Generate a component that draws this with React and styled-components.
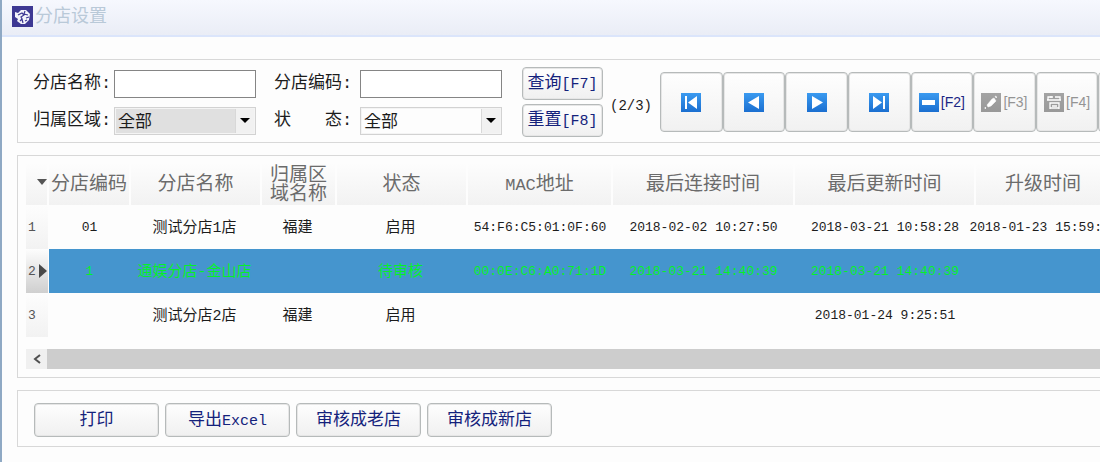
import React from "react";
import styled, { createGlobalStyle, css } from "styled-components";

const GlobalStyle = createGlobalStyle`
  * { box-sizing: border-box; }
  body {
    margin: 0;
    background: #fdfdfd;
    font-family: "Liberation Mono", "Noto Sans CJK SC", monospace;
    font-size: 17px;
    color: #1c1c1c;
  }
  button, input, select { font: inherit; color: inherit; margin: 0; }
`;

const Window = styled.div`
  min-height: 100vh;
  border-left: 2px solid #8fa9c4;
  overflow: hidden;
`;

const TitleBar = styled.header`
  display: flex;
  align-items: center;
  gap: 2px;
  height: 37px;
  padding: 0 10px 3px;
  background: linear-gradient(#f6f8fe, #eaedf6);
  border-bottom: 2px solid #dbe5fb;
`;

const Title = styled.h1`
  margin: 0;
  padding-top: 2px;
  font-size: 18px;
  line-height: 24px;
  font-weight: 400;
  color: #b9c9d8;
`;

const Content = styled.main`
  display: flex;
  flex-direction: column;
  gap: 12px;
  padding: 22px 0 15px 15px;
`;

const Panel = styled.section`
  border: 1px solid #d8d8d8;
  border-right: 0;
  overflow: hidden;
`;

const Toolbar = styled(Panel)`
  display: flex;
  align-items: center;
  padding: 7px 0 5px 15px;
`;

const Filters = styled.form`
  display: grid;
  flex: none;
  grid-template-columns: 81px 142px 18px 86px 142px;
  grid-auto-rows: 28px;
  row-gap: 9px;
`;

const Label = styled.label`
  grid-column: ${(p) => (p.$second ? 4 : 1)};
  line-height: 28px;
  white-space: nowrap;
`;

const TextField = styled.input`
  width: 100%;
  height: 28px;
  padding: 0 4px;
  background: #fff;
  border: 1px solid #858585;
  border-radius: 0;
`;

const SelectWrap = styled.div`
  display: grid;
  grid-template-columns: 1fr 20px;
  height: 28px;
  border: 1px solid #d2d2d2;
  background: #f1f1f1;
`;

const Select = styled.select`
  grid-area: 1 / 1 / 2 / 3;
  appearance: none;
  width: 100%;
  padding: 3px 22px 0 2px;
  border: 1px solid #f4f4f4;
  border-radius: 0;
  background: linear-gradient(to left, #f1f1f1 18px, #d8d8d8 18px, #d8d8d8 19px, ${(p) => (p.$shaded ? "#e0e0e0" : "#fdfdfd")} 19px);
`;

const Arrow = styled.svg`
  grid-area: 1 / 2;
  align-self: center;
  justify-self: center;
  pointer-events: none;
`;

const Button = styled.button`
  height: ${(p) => (p.$tall ? 34 : 33)}px;
  width: ${(p) => (p.$tall ? 125 : 81)}px;
  padding: 2px 0 0;
  border: 1px solid #b6baba;
  border-radius: 4px;
  background: linear-gradient(#fefefe, #f0f0f0);
  box-shadow: inset 0 0 0 1px #e6e6e6;
  color: #14227c;
  line-height: 24px;
  white-space: nowrap;
`;

const Latin = styled.span`
  font-size: 15px;
`;

const HeadLatin = styled.span`
  font-size: 17px;
`;

const ButtonStack = styled.div`
  display: flex;
  flex: none;
  flex-direction: column;
  gap: 4px;
  margin-left: 20px;
`;

const Counter = styled.output`
  flex: none;
  width: 57px;
  padding: 8px 0 0 7px;
  font-size: 14px;
`;

const Nav = styled.nav`
  display: grid;
  flex: none;
  grid-template-columns: repeat(8, 1fr);
  width: 501px;
`;

const NavButton = styled.button`
  display: flex;
  align-items: center;
  justify-content: center;
  gap: 2px;
  height: 60px;
  padding: 0;
  border: 1px solid #b6baba;
  border-radius: 4px;
  background: linear-gradient(#fefefe, #f1f1f1);
  box-shadow: inset 0 0 0 1px #e6e6e6;
  color: ${(p) => (p.disabled ? "#949494" : "#1a2684")};
  font-family: "Liberation Sans", sans-serif;
  font-size: 14px;
`;

const GridPanel = styled(Panel)`
  padding: 7px 0 8px 8px;
`;

const Table = styled.table`
  width: 1086px;
  table-layout: fixed;
  border-collapse: separate;
  border-spacing: 0;
`;

const HeadCell = styled.th`
  height: 42px;
  padding: 3px 0 0;
  border-right: 2px solid #fdfdfd;
  background: linear-gradient(#fdfdfd, #f2f2f2);
  color: #6b6b6b;
  font-size: 19px;
  line-height: 19px;
  font-weight: 400;
  text-align: center;

  svg { display: block; margin: 0 0 8px 11px; }
`;

const Wrapped = styled.span`
  display: block;
  width: 57px;
  margin: 0 auto;
`;

const Cell = styled.td`
  height: 44px;
  padding: ${(p) => (p.$code ? "2px 1px 0 0" : "4px 4px 0 0")};
  font-size: ${(p) => (p.$code ? 13 : 15)}px;
  line-height: 20px;
  ${(p) => p.$selected && css`background: #4595ce; color: #06f02a;`}
`;

const CellText = styled.div`
  display: flex;
  justify-content: center;
  white-space: pre;
`;

const RowHead = styled.th`
  padding: 0 0 0 2px;
  border-right: 1px solid #fdfdfd;
  background: linear-gradient(#fdfdfd, ${(p) => (p.$selected ? "#cfcfcf" : "#f2f2f2")});
  color: #555;
  font-size: 13px;
  font-weight: 400;
`;

const RowMark = styled.div`
  display: flex;
  align-items: center;
  gap: 3px;
`;

const ScrollBar = styled.div`
  display: flex;
  height: 20px;
  margin-top: 12px;
  background: #cdcdcd;
`;

const ScrollButton = styled.button`
  display: flex;
  align-items: center;
  justify-content: center;
  width: 21px;
  padding: 0;
  border: 0;
  background: #f0f0f0;
`;

const Actions = styled(Panel)`
  display: flex;
  gap: 6px;
  padding: 12px 0 9px 16px;
`;

function Logo() {
  return (
    <svg width="21" height="21" viewBox="0 0 21 21" aria-hidden="true">
      <rect width="21" height="21" fill="#3d3893" />
      <path d="M3 6l3 1 3-3 5 0 4 4-1 6-4 4H9l-4-3 1-2-3-2z" fill="#f4f4fb" />
      <path d="M6 9l4-2 2 2-3 2 1 2M13 5l-1 3 4 1M8 15l2-2 1 4M14 12l3-1M13 15l2-1" fill="none" stroke="#3d3893" strokeWidth="1.2" />
    </svg>
  );
}

function Down({ color = "#111", width = 10 }) {
  return (
    <svg width={width} height="6" viewBox="0 0 10 6" aria-hidden="true">
      <path d="M0 0h10L5 6z" fill={color} />
    </svg>
  );
}

const glyphs = {
  first: <path d="M4 3h2v13H4zM16 3v13L7 9.500z" fill="#fff" />,
  prev: <path d="M15 3v13L4 9.500z" fill="#fff" />,
  next: <path d="M5 3v13l11-6.500z" fill="#fff" />,
  last: <path d="M4 3v13l9-6.500zM14 3h2v13h-2z" fill="#fff" />,
  remove: <path d="M3 7h13v5H3z" fill="#fff" />,
  edit: <path d="M6 12l5-6 2-1 2 3-5 5-3 1zM14 3l2 1-1 1zM4 14l1 1-1 1z" fill="#fff" stroke="#fff" strokeWidth="0.500" />,
  save: <path d="M4 7V4h5M11 4h5v3M7 3v2M3 7h14M6 16V10h9v6M6 10h9M8 13h5M6 15h9" fill="none" stroke="#fff" strokeWidth="1.300" />,
};

function NavIcon({ name, muted }) {
  return (
    <svg width="20" height="19" viewBox="0 0 20 19" aria-hidden="true">
      <defs>
        <linearGradient id={`fill-${name}`} x1="0" y1="0" x2="0" y2="1">
          <stop offset="0" stopColor={muted ? "#a3a3a3" : "#3a9af0"} />
          <stop offset="1" stopColor={muted ? "#999" : "#1b6fd0"} />
        </linearGradient>
      </defs>
      <rect width="20" height="19" fill={`url(#fill-${name})`} />
      {glyphs[name]}
    </svg>
  );
}

function DropDown({ id, shaded }) {
  return (
    <SelectWrap>
      <Select id={id} $shaded={shaded} defaultValue="all">
        <option value="all">全部</option>
      </Select>
      <Arrow width="10" height="5" viewBox="0 0 10 5" aria-hidden="true">
        <path d="M0 0h10L5 5z" fill="#000" />
      </Arrow>
    </SelectWrap>
  );
}

const columnWidths = [23, 82, 131, 75, 131, 145, 182, 181, 136];

const rows = [
  ["01", "测试分店1店", "福建", "启用", "54:F6:C5:01:0F:60", "2018-02-02 10:27:50", "2018-03-21 10:58:28", "2018-01-23 15:59:10"],
  ["1", "通娱分店-金山店", "", "待审核", "00:0E:C6:A0:71:1D", "2018-03-21 14:40:39", "2018-03-21 14:40:39", ""],
  ["", "测试分店2店", "福建", "启用", "", "", "2018-01-24 9:25:51", ""],
];

const selectedRow = 1;
const isCode = (column) => column === 0 || column > 3;

export default function App() {
  return (
    <Window>
      <GlobalStyle />
      <TitleBar>
        <Logo />
        <Title>分店设置</Title>
      </TitleBar>
      <Content>
        <Toolbar>
          <Filters>
            <Label htmlFor="name">分店名称:</Label>
            <TextField id="name" />
            <Label $second htmlFor="code">分店编码:</Label>
            <TextField id="code" />
            <Label htmlFor="area">归属区域:</Label>
            <DropDown id="area" shaded />
            <Label $second htmlFor="state">状　　态:</Label>
            <DropDown id="state" />
          </Filters>
          <ButtonStack>
            <Button type="button">查询<Latin>[F7]</Latin></Button>
            <Button type="button">重置<Latin>[F8]</Latin></Button>
          </ButtonStack>
          <Counter>(2/3)</Counter>
          <Nav>
            <NavButton aria-label="首条"><NavIcon name="first" /></NavButton>
            <NavButton aria-label="上一条"><NavIcon name="prev" /></NavButton>
            <NavButton aria-label="下一条"><NavIcon name="next" /></NavButton>
            <NavButton aria-label="末条"><NavIcon name="last" /></NavButton>
            <NavButton><NavIcon name="remove" />[F2]</NavButton>
            <NavButton disabled><NavIcon name="edit" muted />[F3]</NavButton>
            <NavButton disabled><NavIcon name="save" muted />[F4]</NavButton>
            <NavButton aria-label="更多" />
          </Nav>
        </Toolbar>

        <GridPanel>
          <Table>
            <colgroup>
              {columnWidths.map((w, i) => <col key={i} width={w} />)}
            </colgroup>
            <thead>
              <tr>
                <HeadCell aria-label="行"><Down color="#555" /></HeadCell>
                <HeadCell>分店编码</HeadCell>
                <HeadCell>分店名称</HeadCell>
                <HeadCell><Wrapped>归属区域名称</Wrapped></HeadCell>
                <HeadCell>状态</HeadCell>
                <HeadCell><HeadLatin>MAC</HeadLatin>地址</HeadCell>
                <HeadCell>最后连接时间</HeadCell>
                <HeadCell>最后更新时间</HeadCell>
                <HeadCell>升级时间</HeadCell>
              </tr>
            </thead>
            <tbody>
              {rows.map((row, r) => (
                <tr key={r}>
                  <RowHead scope="row" $selected={r === selectedRow}>
                    <RowMark>
                      {r + 1}
                      {r === selectedRow && (
                        <svg width="8" height="14" viewBox="0 0 8 14" aria-hidden="true">
                          <path d="M0 0l8 7-8 7z" fill="#484848" />
                        </svg>
                      )}
                    </RowMark>
                  </RowHead>
                  {row.map((text, c) => (
                    <Cell key={c} $code={isCode(c)} $selected={r === selectedRow}>
                      <CellText>{text}</CellText>
                    </Cell>
                  ))}
                </tr>
              ))}
            </tbody>
          </Table>
          <ScrollBar>
            <ScrollButton aria-label="向左滚动">
              <svg width="8" height="10" viewBox="0 0 8 10" aria-hidden="true">
                <path d="M7 1L2 5l5 4" fill="none" stroke="#505050" strokeWidth="2" />
              </svg>
            </ScrollButton>
          </ScrollBar>
        </GridPanel>

        <Actions>
          <Button $tall>打印</Button>
          <Button $tall>导出<Latin>Excel</Latin></Button>
          <Button $tall>审核成老店</Button>
          <Button $tall>审核成新店</Button>
        </Actions>
      </Content>
    </Window>
  );
}
